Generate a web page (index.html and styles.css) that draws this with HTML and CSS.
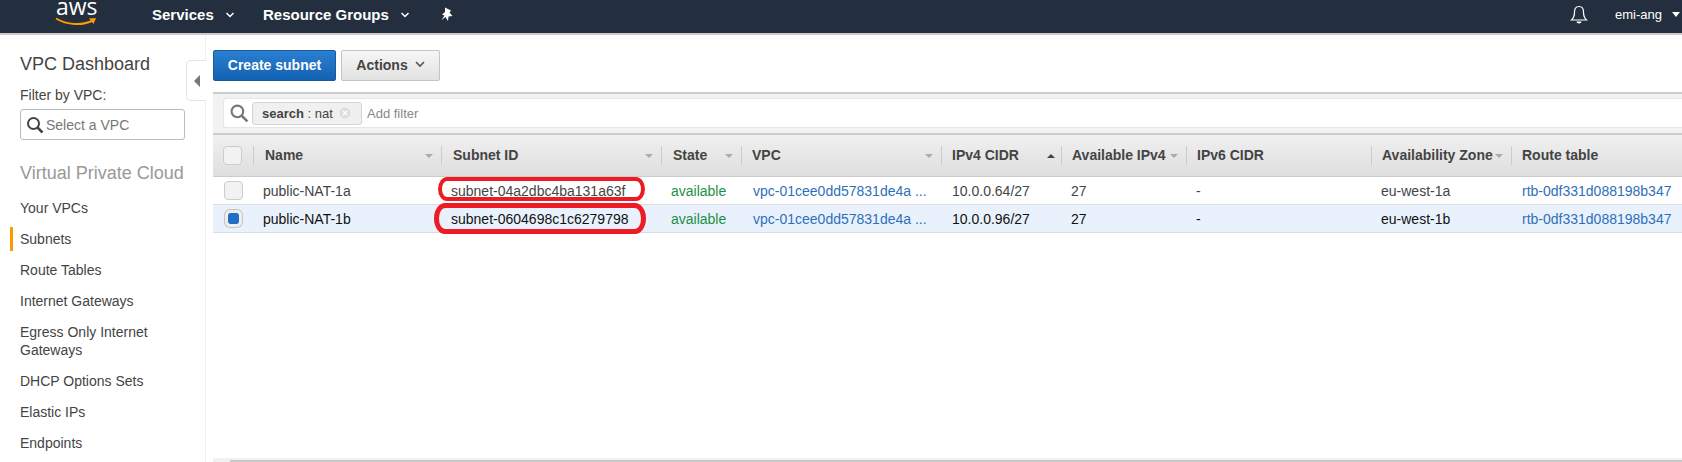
FILE: index.html
```html
<!DOCTYPE html>
<html lang="en">
<head>
<meta charset="utf-8">
<title>Subnets | VPC Management Console</title>
<link rel="stylesheet" href="styles.css">
</head>
<body>
<header class="topbar">
  <div class="logo">
    <span class="logo-text">aws</span>
    <svg class="logo-smile" width="42" height="10" viewBox="0 0 42 10"><path d="M1 1.500C12 8 27 9 38 3.500" fill="none" stroke="#f90" stroke-width="2"/><path d="M34 1.500L41 1 38.500 7" fill="#f90"/></svg>
  </div>
  <nav class="topnav">
    <a class="topnav-item services">Services<svg class="chev" width="10" height="6" viewBox="0 0 10 6"><path d="M1.500 1L5 4.500 8.500 1" fill="none" stroke="#fff" stroke-width="1.500"/></svg></a>
    <a class="topnav-item groups">Resource Groups<svg class="chev" width="10" height="6" viewBox="0 0 10 6"><path d="M1.500 1L5 4.500 8.500 1" fill="none" stroke="#fff" stroke-width="1.500"/></svg></a>
    <svg class="pin" width="14" height="15" viewBox="0 0 14 15"><path d="M5 .5L11 3.500 9.500 5.500 12.500 9 8.500 9.500 8 14 5.500 10 1.500 13 4.500 8.500 2 7.500 5 5z" fill="#fff"/></svg>
  </nav>
  <div class="topbar-right">
    <svg class="bell" width="18" height="20" viewBox="0 0 18 20"><path d="M9 1.500C5.800 1.500 4.500 4 4.500 7c0 3.500-.8 6-3 8h15c-2.200-2-3-4.500-3-8 0-3-1.300-5.500-4.500-5.500z" fill="none" stroke="#fff" stroke-width="1.200"/><path d="M6.500 16.500a2.500 2 0 0 0 5 0z" fill="#fff"/></svg>
    <span class="user">emi-ang</span>
    <svg class="caret" width="8" height="5" viewBox="0 0 8 5"><path d="M0 0h8L4 5z" fill="#fff"/></svg>
  </div>
</header>

<div class="page">
  <aside class="sidebar">
    <h2 class="side-title">VPC Dashboard</h2>
    <label class="side-label">Filter by VPC:</label>
    <div class="vpc-select">
      <svg width="18" height="18" viewBox="0 0 18 18"><circle cx="7.500" cy="7.500" r="5.500" fill="none" stroke="#444" stroke-width="2"/><path d="M11.500 11.500L16.500 16.500" stroke="#444" stroke-width="2.500"/></svg>
      <span>Select a VPC</span>
    </div>
    <h2 class="side-section">Virtual Private Cloud</h2>
    <ul class="side-nav">
      <li>Your VPCs</li>
      <li class="active">Subnets</li>
      <li>Route Tables</li>
      <li>Internet Gateways</li>
      <li>Egress Only Internet Gateways</li>
      <li>DHCP Options Sets</li>
      <li>Elastic IPs</li>
      <li>Endpoints</li>
    </ul>
    <div class="collapse-tab"><svg width="6" height="12" viewBox="0 0 6 12"><path d="M6 0v12L0 6z" fill="#777"/></svg></div>
  </aside>

  <main class="main">
    <div class="toolbar">
      <button class="btn btn-primary">Create subnet</button>
      <button class="btn btn-default">Actions<svg width="10" height="7" viewBox="0 0 10 7"><path d="M1 1L5 5 9 1" fill="none" stroke="#555" stroke-width="1.600"/></svg></button>
    </div>

    <div class="filter-strip">
      <div class="filter-box">
        <svg class="filter-icon" width="19" height="19" viewBox="0 0 18 18"><circle cx="7" cy="7" r="5.500" fill="none" stroke="#777" stroke-width="2"/><path d="M11 11L16.500 16.500" stroke="#777" stroke-width="2.500"/></svg>
        <span class="token"><span class="token-text"><b>search</b> : nat</span><svg width="12" height="12" viewBox="0 0 12 12"><circle cx="6" cy="6" r="5.500" fill="#ddd"/><path d="M3.800 3.800l4.400 4.400M8.200 3.800l-4.400 4.400" stroke="#fff" stroke-width="1.300"/></svg></span>
        <span class="add-filter">Add filter</span>
      </div>
    </div>

    <div class="grid-row grid-head">
      <div class="cell"><span class="check"></span></div>
      <div class="cell head-cell"><span>Name</span><i class="sort"></i></div>
      <div class="cell head-cell"><span>Subnet ID</span><i class="sort"></i></div>
      <div class="cell head-cell"><span>State</span><i class="sort"></i></div>
      <div class="cell head-cell"><span>VPC</span><i class="sort"></i></div>
      <div class="cell head-cell"><span>IPv4 CIDR</span><i class="sort sort-up"></i></div>
      <div class="cell head-cell"><span>Available IPv4</span><i class="sort"></i></div>
      <div class="cell head-cell"><span>IPv6 CIDR</span></div>
      <div class="cell head-cell"><span>Availability Zone</span><i class="sort"></i></div>
      <div class="cell head-cell"><span>Route table</span></div>
    </div>

    <div class="grid-row body-row">
      <div class="cell"><span class="check"></span></div>
      <div class="cell">public-NAT-1a</div>
      <div class="cell">subnet-04a2dbc4ba131a63f</div>
      <div class="cell ok">available</div>
      <div class="cell link">vpc-01cee0dd57831de4a ...</div>
      <div class="cell">10.0.0.64/27</div>
      <div class="cell">27</div>
      <div class="cell">-</div>
      <div class="cell">eu-west-1a</div>
      <div class="cell link">rtb-0df331d088198b347</div>
    </div>
    <div class="grid-row body-row selected">
      <div class="cell"><span class="check checked"></span></div>
      <div class="cell">public-NAT-1b</div>
      <div class="cell">subnet-0604698c1c6279798</div>
      <div class="cell ok">available</div>
      <div class="cell link">vpc-01cee0dd57831de4a ...</div>
      <div class="cell">10.0.0.96/27</div>
      <div class="cell">27</div>
      <div class="cell">-</div>
      <div class="cell">eu-west-1b</div>
      <div class="cell link">rtb-0df331d088198b347</div>
    </div>

    <div class="spacer"></div>
    <div class="hscroll"><div class="hscroll-thumb"></div></div>
  </main>
</div>

<span class="mark mark-a"></span>
<span class="mark mark-b"></span>
</body>
</html>
```

FILE: styles.css
```css
* { box-sizing: border-box; }
html, body { margin: 0; height: 462px; overflow: hidden; background: #fff; }
body { font-family: "Liberation Sans", Arial, sans-serif; font-size: 14px; color: #444; position: relative; }

.topbar { height: 35px; background: #232f3e; border-bottom: 2px solid #ccc; display: flex; align-items: flex-start; color: #fff; }
.logo { width: 152px; position: relative; height: 33px; flex: none; }
.logo-text { position: absolute; left: 56px; top: 0; font-family: "Open Sans", sans-serif; font-size: 23px; line-height: 12px; color: #fff; }
.logo-smile { position: absolute; left: 55px; top: 17px; }
.topnav { display: flex; align-items: center; height: 28px; font-weight: bold; font-size: 15px; }
.topnav-item { display: flex; align-items: center; }
.services { width: 111px; }
.groups { width: 177px; }
.chev { margin-left: 11px; margin-top: 2px; }
.topbar-right { margin-left: auto; display: flex; align-items: center; height: 29px; }
.bell { margin-right: 27px; }
.user { font-size: 13px; width: 57px; }
.caret { margin-right: 2px; }

.page { display: flex; height: 427px; }
.sidebar { width: 206px; flex: none; border-right: 1px solid #eee; padding: 18px 0 0 20px; position: relative; }
.side-title, .side-section { margin: 0; font-size: 18px; line-height: 22px; font-weight: normal; color: #444; }
.side-label { display: block; margin-top: 11px; line-height: 18px; }
.vpc-select { margin-top: 5px; width: 165px; height: 31px; border: 1px solid #bbb; border-radius: 3px; display: flex; align-items: center; padding-left: 5px; gap: 2px; color: #777; }
.side-section { margin-top: 22px; color: #999; }
.side-nav { list-style: none; margin: 8px 0 0; padding: 0 20px 0 0; }
.side-nav li { padding: 6.5px 0; line-height: 18px; position: relative; }
.side-nav .active::before { content: ""; position: absolute; left: -10px; top: 4px; width: 3px; height: 24px; background: #f90; }
.collapse-tab { position: absolute; left: 186px; top: 25px; width: 20px; height: 41px; background: #fff; border: 1px solid #e4e4e4; border-right: 0; border-radius: 5px 0 0 5px; display: flex; align-items: center; padding-left: 7px; }

.main { flex: 1; min-width: 0; margin-left: 7px; display: flex; flex-direction: column; }
.toolbar { display: flex; gap: 5px; padding-top: 15px; height: 57px; }
.btn { height: 31px; font: bold 14px "Liberation Sans", Arial, sans-serif; border-radius: 2px; border: 1px solid; padding: 0 0 2px; }
.btn-primary { width: 123px; color: #fff; background: linear-gradient(#2b7fd0, #1362b4); border-color: #1b5a9b; }
.btn-default { width: 99px; color: #444; background: linear-gradient(#f6f6f6, #e2e2e2); border-color: #c4c4c4; }
.btn-default svg { margin-left: 7px; vertical-align: 2px; }

.filter-strip { height: 43px; background: #f2f2f2; border-top: 2px solid #ccc; border-bottom: 2px solid #ccc; padding: 4px 0 0 10px; }
.filter-box { height: 30px; background: #fff; border: 1px solid #e6e6e6; border-right: 0; border-radius: 3px 0 0 3px; display: flex; align-items: center; padding-left: 6px; }
.token { margin-left: 3px; width: 110px; height: 23px; padding-left: 9px; display: flex; align-items: center; background: #f0f0f0; border: 1px solid #d4d4d4; border-radius: 3px; font-size: 13px; }
.token svg { margin-left: 6px; }
.add-filter { margin-left: 5px; color: #888; font-size: 13px; }

.grid-row { display: grid; grid-template-columns: 40px 188px 220px 80px 200px 120px 125px 185px 140px 171px; align-items: center; }
.grid-head { height: 42px; background: linear-gradient(#f0f0f0, #dedede); border-bottom: 1px solid #ccc; font-weight: bold; }
.cell { padding-left: 11px; white-space: nowrap; overflow: hidden; }
.cell:first-child { padding-left: 10px; }
.head-cell { height: 19px; line-height: 19px; border-left: 1px solid #ccc; position: relative; padding-left: 10px; }
.head-cell:nth-child(2), .head-cell:nth-child(3), .head-cell:nth-child(4) { padding-left: 11px; }
.sort { position: absolute; right: 8px; top: 8px; width: 0; height: 0; border-left: 4px solid transparent; border-right: 4px solid transparent; border-top: 4px solid #aaa; }
.sort-up { border-top: 0; border-bottom: 4px solid #444; right: 6px; }
.check { display: block; width: 19px; height: 19px; background: #f2f2f2; border: 1px solid #ccc; border-radius: 4px; }
.checked { width: 17px; height: 17px; margin: 1px; background: #1f6fc5; background-clip: padding-box; border: 3px solid #eee; border-radius: 5px; box-shadow: 0 0 0 1px #c4c4c4; }
.body-row { height: 28px; border-bottom: 1px solid #ddd; }
.body-row .cell:first-child { padding-left: 11px; }
.body-row .cell { line-height: 18px; padding-left: 10px; }
.body-row .link, .body-row .cell:nth-child(6) { padding-left: 11px; }
.body-row .cell:nth-child(5) { padding-left: 12px; }
.selected { background: #e9f2fc; color: #111; }
.ok { color: #1d8f45; }
.link, .selected .link { color: #2f6fba; }
.selected .ok { color: #1d8f45; }

.spacer { flex: 1; }
.hscroll { height: 4px; background: #f1f1f1; padding-left: 17px; flex: none; }
.hscroll-thumb { height: 2px; background: #c8c8c8; transform: translateY(2px); }

.mark { position: absolute; border: 4px solid #ed1c24; }
.mark-a { left: 438px; top: 177px; width: 207px; height: 24px; border-radius: 9px / 50%; }
.mark-b { left: 434px; top: 203px; width: 212px; height: 31px; border-width: 5px; border-radius: 11px / 50%; }
```
